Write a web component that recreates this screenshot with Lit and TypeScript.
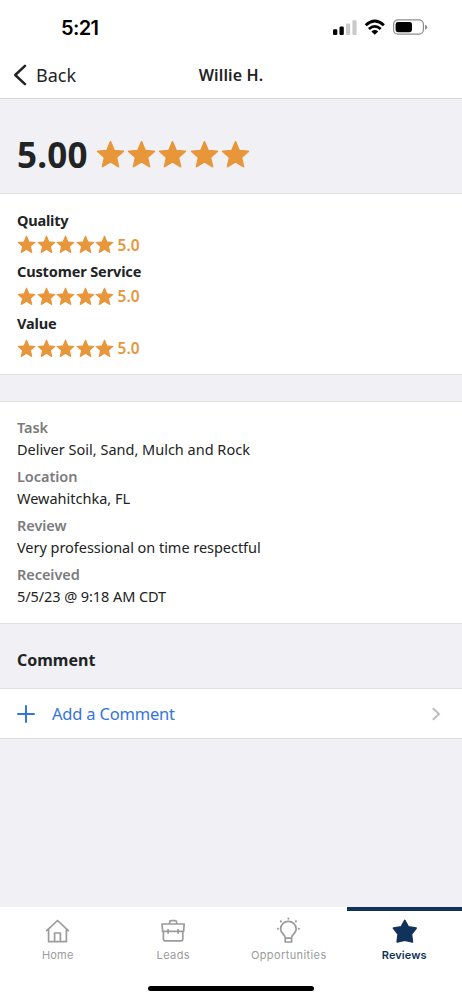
import { LitElement, html, css, svg } from "lit";
import { customElement, property } from "lit/decorators.js";

const STAR = "M12 1.5 15 8.7 22.6 9.4 16.9 14.4 18.6 22 12 18 5.4 22 7.1 14.4 1.4 9.4 9 8.7Z";

@customElement("star-row")
class StarRow extends LitElement {
  @property({ type: Number }) count = 5;
  static styles = css`
    :host { display: flex; gap: var(--star-gap, .5px); }
    svg { display: block; width: var(--star-size, 19px); height: var(--star-size, 19px); fill: #e8963a; stroke: #e8963a; stroke-width: 1.4; stroke-linejoin: round; }
  `;
  render() {
    return Array.from({ length: this.count }, () => html`<svg viewBox="0 0 24 24"><path d=${STAR} /></svg>`);
  }
}

const tabs = [
  {
    name: "Home", cls: "home",
    icon: svg`<path d="M1.2 12.2 12.5 1.5 23.8 12.2M3.6 10.5V22.6H21.4V10.5M9.6 22.6V14H15.4V22.6"/>`,
  },
  {
    name: "Leads", cls: "leads",
    icon: svg`<path d="M8.6 5V3.2Q8.6 1.6 10.2 1.6H14Q15.6 1.6 15.6 3.2V5M1 5H23.2L22.6 12.4H1.6ZM2.4 12.4V20.2Q2.4 21.8 4 21.8H20.2Q21.8 21.8 21.8 20.2V12.4M7.1 10V14.8M17.1 10V14.8"/>`,
  },
  {
    name: "Opportunities", cls: "opps",
    icon: svg`<path d="M9.2 18.4C9.2 15.8 4.6 14.4 4.6 9.9A7.8 7.5 0 0 1 20.2 9.9C20.2 14.4 15.6 15.8 15.6 18.4V23H9.2ZM9.2 19.2H15.6"/><path class="dots" d="M12.4-.4v.01M4.9 2.4v.01M19.9 2.4v.01M1.9 9.8v.01M22.9 9.8v.01"/>`,
  },
  {
    name: "Reviews", cls: "reviews",
    icon: svg`<path d="M12.8 1.4 16.3 7.8 24.1 9.2 19.4 15.1 20.4 22.9 12.8 21.1 5.2 22.9 6.2 15.1 1.5 9.2 9.3 7.8Z"/>`,
  },
];

const ratings = [["Quality", "r1"], ["Customer Service", "r2"], ["Value", "r3"]];
const details = [
  ["Task", "Deliver Soil, Sand, Mulch and Rock", "d1"],
  ["Location", "Wewahitchka, FL", "d2"],
  ["Review", "Very professional on time respectful", "d3"],
  ["Received", "5/5/23 @ 9:18 AM CDT", "d4"],
];

@customElement("app-root")
class AppRoot extends LitElement {
  static styles = css`
    :host { display: flex; flex-direction: column; height: 1000px; width: 462px; overflow: hidden; box-sizing: border-box; background: #f0f0f5; color: #222324; font-family: "Noto Sans", sans-serif; white-space: nowrap; }
    * { box-sizing: border-box; }
    svg { display: block; flex: none; fill: none; }
    .status { height: 52px; flex: none; background: #fff; display: flex; align-items: center; padding: 4px 34px 0 61px; }
    .time { flex: 1; font: 600 20px/24px Inter, sans-serif; letter-spacing: -.6px; color: #000; }
    .nav { height: 47px; flex: none; background: #fff; border-bottom: 1px solid #d8d8da; display: grid; grid-template-columns: 1fr auto 1fr; align-items: center; padding: 0 13px; }
    .back { display: flex; align-items: center; gap: 9px; font-size: 18px; line-height: 24px; }
    .back span { padding-bottom: 1px; }
    .title { font-size: 16px; font-weight: 600; line-height: 24px; letter-spacing: .15px; }
    .score { height: 95px; flex: none; display: flex; align-items: center; padding: 17px 17px 0; gap: 9px; border-bottom: 1px solid #e0e0e4; --star-size: 29px; --star-gap: 2.2px; }
    .score b { font-size: 35px; line-height: 44px; width: 70px; letter-spacing: .2px; }
    .ratings { height: 181px; flex: none; background: #fff; padding: 13.8px 17px 0; border-bottom: 1px solid #e0e0e4; }
    .rating { height: 51.7px; }
    .label { font-size: 14.5px; line-height: 24px; font-weight: 700; }
    .r1 { letter-spacing: -.2px; }
    .r2 { letter-spacing: -.13px; }
    .r3 { letter-spacing: -.15px; }
    .stars { height: 26px; display: flex; align-items: center; gap: 3.5px; color: #e8963a; font-weight: 600; font-size: 15.5px; line-height: 22px; }
    .stars span { letter-spacing: .1px; }
    .gap { height: 27px; flex: none; border-bottom: 1px solid #e0e0e4; }
    .details { height: 222px; flex: none; background: #fff; border-bottom: 1px solid #e0e0e4; padding: 14px 17px; display: flex; flex-direction: column; gap: 5px; font-size: 14.5px; line-height: 22px; }
    .key { color: #7b7b7d; font-weight: 600; letter-spacing: -.05px; }
    .d3 { letter-spacing: -.04px; }
    .d4 { letter-spacing: -.08px; }
    .comment { height: 65px; flex: none; padding: 8px 17px 0; display: flex; align-items: center; font-size: 16px; font-weight: 700; border-bottom: 1px solid #e0e0e4; }
    .add { height: 50px; flex: none; display: flex; align-items: center; background: #fff; border-bottom: 1px solid #dcdce0; padding: 0 21px 0 17px; color: #3474df; font-size: 16.5px; }
    .add span { flex: 1; padding-left: 17px; letter-spacing: -.2px; }
    .tabs { height: 93px; margin-top: auto; flex: none; background: #fff; display: grid; grid-template-columns: repeat(4, 1fr); grid-template-rows: 77px 16px; }
    .tab { display: flex; flex-direction: column; align-items: center; border-top: 4px solid transparent; padding-top: 8px; font: 400 11px/16px Inter, sans-serif; color: #9b9b9b; gap: 4px; letter-spacing: .4px; }
    .tab svg { stroke: currentColor; stroke-width: 1.7; overflow: visible; stroke-linejoin: round; }
    .dots { stroke-width: 2.1; stroke-linecap: round; }
    .tab.reviews { color: #11335b; border-color: #11335b; font-weight: 600; letter-spacing: .1px; }
    .tab.reviews svg { fill: currentColor; }
    .tab.home span { letter-spacing: .2px; }
    .indicator { grid-column: 1 / -1; justify-self: center; width: 166px; height: 5px; margin-top: 2px; border-radius: 3px; background: #000; }
  `;
  render() {
    return html`
      <div class="status">
        <span class="time">5:21</span>
        <svg width="95" height="18" viewBox="0 0 95 18">
          <g fill="#000"><rect x="0" y="10.2" width="4.3" height="5.8" rx="1.2"/><rect x="6.5" y="7.5" width="4.3" height="8.5" rx="1.2"/></g>
          <g fill="#cacaca"><rect x="13" y="4.5" width="4.2" height="11.5" rx="1.2"/><rect x="19.4" y="1.2" width="4.2" height="14.8" rx="1.2"/></g>
          <g stroke="#000" stroke-width="2.8"><path d="M32.7 6.2Q41.8 -2.1 50.9 6.2M35.9 10Q41.8 4.7 47.7 10"/></g>
          <path fill="#000" d="M38.4 12.4Q41.8 9.6 45.2 12.4L41.8 15.8Z"/>
          <rect x="60.6" y=".9" width="29.8" height="14.3" rx="4.4" stroke="#8d8d8d" stroke-width="1.2"/>
          <rect x="62.6" y="3" width="16.4" height="10.2" rx="2.4" fill="#000"/>
          <path fill="#8d8d8d" d="M92 5.7Q94.2 6.5 94.2 8.2T92 10.7Z"/>
        </svg>
      </div>
      <div class="nav">
        <div class="back"><svg width="14" height="22" viewBox="0 0 14 22"><path d="M12 1.8 2.2 11 12 20.2" stroke="#222324" stroke-width="2.5" stroke-linecap="round" stroke-linejoin="round"/></svg><span>Back</span></div>
        <span class="title">Willie H.</span>
      </div>
      <div class="score"><b>5.00</b><star-row></star-row></div>
      <div class="ratings">
        ${ratings.map(([name, c]) => html`<div class="rating"><div class="label"><span class=${c}>${name}</span></div><div class="stars"><star-row></star-row><span>5.0</span></div></div>`)}
      </div>
      <div class="gap"></div>
      <div class="details">
        ${details.map(([key, value, c]) => html`<div><div class="key">${key}</div><div><span class=${c}>${value}</span></div></div>`)}
      </div>
      <div class="comment"><span>Comment</span></div>
      <div class="add">
        <svg width="18" height="18" viewBox="0 0 18 18"><path d="M9 1V17M1 9H17" stroke="#3474df" stroke-width="2" stroke-linecap="round"/></svg>
        <span>Add a Comment</span>
        <svg width="10" height="14" viewBox="0 0 10 14"><path d="M1.8 1.2 8 7 1.8 12.8" stroke="#bebec0" stroke-width="2"/></svg>
      </div>
      <div class="tabs">
        ${tabs.map((t) => html`<div class="tab ${t.cls}"><svg width="25" height="24" viewBox="0 0 25 24">${t.icon}</svg><span>${t.name}</span></div>`)}
        <div class="indicator"></div>
      </div>`;
  }
}
